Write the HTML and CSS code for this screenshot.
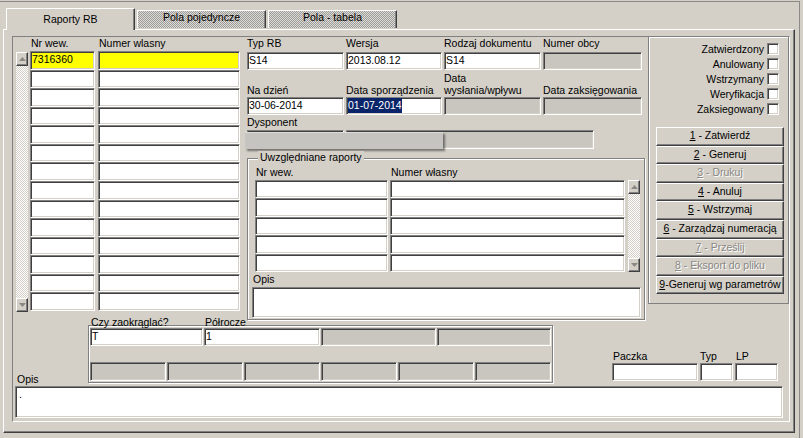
FILE: index.html
```html
<!DOCTYPE html>
<html lang="pl">
<head>
<meta charset="utf-8">
<title>Raporty RB</title>
<link rel="stylesheet" href="styles.css">
</head>
<body>
<div class="window">
  <div class="tabs">
    <div class="tab active">Raporty RB</div>
    <div class="tab dim">Pola pojedyncze</div>
    <div class="tab dim">Pola - tabela</div>
  </div>
  <div class="page">
    <div class="form">
      <div class="upper">
        <div class="list">
          <div class="list-head"><span>Nr wew.</span><span>Numer wlasny</span></div>
          <div class="list-body">
            <div class="vscroll">
              <div class="sbtn"><svg width="7" height="4" viewBox="0 0 7 4"><path d="M3.5 0L7 4H0z" fill="#8a8884"/></svg></div>
              <div class="strack"></div>
              <div class="sbtn"><svg width="7" height="4" viewBox="0 0 7 4"><path d="M0 0H7L3.5 4z" fill="#8a8884"/></svg></div>
            </div>
            <div class="rows">
              <div class="fld hl">7316360</div><div class="fld hl"></div>
              <div class="fld"></div><div class="fld"></div>
              <div class="fld"></div><div class="fld"></div>
              <div class="fld"></div><div class="fld"></div>
              <div class="fld"></div><div class="fld"></div>
              <div class="fld"></div><div class="fld"></div>
              <div class="fld"></div><div class="fld"></div>
              <div class="fld"></div><div class="fld"></div>
              <div class="fld"></div><div class="fld"></div>
              <div class="fld"></div><div class="fld"></div>
              <div class="fld"></div><div class="fld"></div>
              <div class="fld"></div><div class="fld"></div>
              <div class="fld"></div><div class="fld"></div>
              <div class="fld"></div><div class="fld"></div>
            </div>
          </div>
        </div>

        <div class="details">
          <div class="grid4">
            <div class="lbl">Typ RB</div>
            <div class="lbl">Wersja</div>
            <div class="lbl">Rodzaj dokumentu</div>
            <div class="lbl">Numer obcy</div>
            <div class="fld">S14</div>
            <div class="fld">2013.08.12</div>
            <div class="fld">S14</div>
            <div class="fld dis"></div>
            <div class="lbl lbl2">Na dzień</div>
            <div class="lbl lbl2">Data sporządzenia</div>
            <div class="lbl lbl2">Data<br>wysłania/wpływu</div>
            <div class="lbl lbl2">Data zaksięgowania</div>
            <div class="fld">30-06-2014</div>
            <div class="fld"><span class="sel">01-07-2014</span></div>
            <div class="fld dis"></div>
            <div class="fld dis"></div>
          </div>
          <div class="lbl dys-lbl">Dysponent</div>
          <div class="dys">
            <div class="fld dis dys1"></div>
            <div class="fld dis dys2"></div>
            <div class="dropshadow"></div>
          </div>
          <div class="group">
            <span class="legend">Uwzględniane raporty</span>
            <div class="g-head"><span>Nr wew.</span><span>Numer własny</span></div>
            <div class="g-body">
              <div class="g-rows">
                <div class="fld"></div><div class="fld"></div>
                <div class="fld"></div><div class="fld"></div>
                <div class="fld"></div><div class="fld"></div>
                <div class="fld"></div><div class="fld"></div>
                <div class="fld"></div><div class="fld"></div>
              </div>
              <div class="vscroll small">
                <div class="sbtn"><svg width="7" height="4" viewBox="0 0 7 4"><path d="M3.5 0L7 4H0z" fill="#8a8884"/></svg></div>
                <div class="strack"></div>
                <div class="sbtn"><svg width="7" height="4" viewBox="0 0 7 4"><path d="M0 0H7L3.5 4z" fill="#8a8884"/></svg></div>
              </div>
            </div>
            <div class="lbl g-opis-lbl">Opis</div>
            <div class="fld g-opis"></div>
          </div>
        </div>

        <div class="status">
          <div class="chk"><span>Zatwierdzony</span><i class="box"></i></div>
          <div class="chk"><span>Anulowany</span><i class="box"></i></div>
          <div class="chk"><span>Wstrzymany</span><i class="box"></i></div>
          <div class="chk"><span>Weryfikacja</span><i class="box"></i></div>
          <div class="chk"><span>Zaksiegowany</span><i class="box"></i></div>
          <div class="buttons">
            <div class="btn"><u>1</u>&nbsp;- Zatwierdź</div>
            <div class="btn"><u>2</u>&nbsp;- Generuj</div>
            <div class="btn off"><u>3</u>&nbsp;- Drukuj</div>
            <div class="btn"><u>4</u>&nbsp;- Anuluj</div>
            <div class="btn"><u>5</u>&nbsp;- Wstrzymaj</div>
            <div class="btn"><u>6</u>&nbsp;- Zarządzaj numeracją</div>
            <div class="btn off"><u>7</u>&nbsp;- Prześlij</div>
            <div class="btn off"><u>8</u>&nbsp;- Eksport do pliku</div>
            <div class="btn"><u>9</u>-Generuj wg parametrów</div>
          </div>
        </div>
      </div>

      <div class="lower">
        <div class="lower-row">
          <div class="lbl opis-lbl">Opis</div>
          <div class="round">
            <div class="round-labels"><span>Czy zaokrąglać?</span><span>Półrocze</span></div>
            <div class="round-box">
              <div class="r1">
                <div class="fld">T</div>
                <div class="fld">1</div>
                <div class="fld dis"></div>
                <div class="fld dis"></div>
              </div>
              <div class="r2">
                <div class="fld dis"></div>
                <div class="fld dis"></div>
                <div class="fld dis"></div>
                <div class="fld dis"></div>
                <div class="fld dis"></div>
                <div class="fld dis"></div>
              </div>
            </div>
          </div>
          <div class="paczka">
            <div class="lbl p1">Paczka</div>
            <div class="lbl">Typ</div>
            <div class="lbl p1">LP</div>
            <div class="fld"></div>
            <div class="fld"></div>
            <div class="fld"></div>
          </div>
        </div>
        <div class="fld opis">.</div>
      </div>
    </div>
  </div>
</div>
</body>
</html>
```

FILE: styles.css
```css
* { box-sizing: border-box; }
html, body { margin: 0; padding: 0; }
body {
  width: 803px;
  height: 438px;
  overflow: hidden;
  background: #d4d0c8;
  font-family: "Liberation Sans", Arial, sans-serif;
  font-size: 10.5px;
  color: #000;
}

.window {
  margin-top: 1px;
  width: 800px;
  height: 437px;
  border-top: 1px solid #8c8a86;
  border-right: 1px solid #8c8a86;
}

/* tabs */
.tabs {
  display: flex;
  align-items: flex-end;
  height: 27px;
  padding: 6px 0 0 6px;
}
.tab {
  width: 129px;
  text-align: center;
  white-space: nowrap;
  border-top: 1px solid #fff;
  border-left: 1px solid #fff;
  border-right: 1px solid #404040;
  box-shadow: inset -1px 0 #808080;
}
.tab.active {
  position: relative;
  z-index: 1;
  height: 22px;
  margin-bottom: -1px;
  line-height: 20px;
  background: #d4d0c8;
}
.tab.dim {
  height: 18px;
  margin-left: 2px;
  margin-bottom: 1px;
  line-height: 13px;
  background: repeating-conic-gradient(#9e9c98 0 25%, #dcdad6 0 50%) 0 0 / 2px 2px;
}

/* tab page */
.page {
  margin-left: 3px;
  width: 792px;
  height: 404px;
  border: 1px solid;
  border-color: #fff #404040 #404040 #fff;
  box-shadow: inset -1px -1px #808080;
  padding: 6px 0 0 8px;
}
.form {
  width: 778px;
  height: 386px;
  border: 1px solid;
  border-color: #808080 #fff #fff #808080;
}
.upper {
  display: flex;
  height: 276px;
}

/* generic controls */
.lbl { line-height: 13px; white-space: nowrap; }
.fld {
  background: #fff;
  border: 1px solid;
  border-color: #808080 #fff #fff #808080;
  box-shadow: inset 1px 1px #404040, inset -1px -1px #d4d0c8;
  padding: 0 1px;
  line-height: 15px;
  white-space: nowrap;
  overflow: hidden;
}
.fld.dis { background: #c9c6c0; }
.fld.hl { background: #ffff00; }
.sel {
  display: inline-block;
  background: #0a246a;
  color: #fff;
  line-height: 15px;
}

/* scrollbars */
.vscroll {
  width: 12px;
  display: flex;
  flex-direction: column;
  background: repeating-conic-gradient(#ffffff 0 25%, #d4d0c8 0 50%) 0 0 / 2px 2px;
}
.sbtn {
  height: 14px;
  flex: none;
  display: flex;
  align-items: center;
  justify-content: center;
  background: #d4d0c8;
  border: 1px solid;
  border-color: #fff #404040 #404040 #fff;
  box-shadow: inset -1px -1px #808080;
}
.sbtn svg { display: block; }
.strack { flex: 1; }

/* left list */
.list { width: 231px; padding-left: 3px; }
.list-head {
  display: grid;
  grid-template-columns: 65px 142px;
  column-gap: 3px;
  height: 14px;
  padding-left: 14px;
  line-height: 13px;
}
.list-head span { padding-left: 1px; }
.list-body { display: flex; height: 260px; }
.list-body .vscroll { margin-top: 1px; margin-right: 2px; height: 260px; }
.rows {
  display: grid;
  grid-template-columns: 65px 142px;
  grid-template-rows: repeat(14, 1fr);
  column-gap: 3px;
  height: 260px;
}

/* details */
.details { width: 404px; padding-left: 3px; }
.grid4 {
  display: grid;
  grid-template-columns: 97px 96px 97px 99px;
  grid-template-rows: 15px 18px 27px 18px;
  column-gap: 2px;
}
.lbl2 { align-self: end; line-height: 12px; padding-bottom: 1px; }
.dys-lbl { height: 14px; line-height: 14px; }
.dys {
  position: relative;
  display: flex;
  gap: 2px;
  height: 19px;
  margin-top: 1px;
}
.dys1 { width: 97px; }
.dys2 { width: 248px; background: #d4d0c8; }
.dropshadow {
  position: absolute;
  left: -2px;
  top: 2px;
  width: 198px;
  height: 17px;
  background: #c6c4c0;
  border-top: 1px solid #dedcd8;
  box-shadow: 2px 2px 2px rgba(0, 0, 0, 0.45);
}

.group {
  position: relative;
  width: 398px;
  height: 162px;
  margin-top: 9px;
  border: 1px solid #808080;
  box-shadow: inset 1px 1px #fff, 1px 1px #fff;
  padding: 7px 0 0 7px;
}
.legend {
  position: absolute;
  top: -8px;
  left: 10px;
  padding: 0 2px;
  line-height: 12px;
  background: #d4d0c8;
  white-space: nowrap;
}
.g-head {
  display: grid;
  grid-template-columns: 133px 235px;
  column-gap: 2px;
  height: 14px;
  line-height: 12px;
}
.g-head span { padding-left: 1px; }
.g-body { display: flex; gap: 3px; height: 92px; }
.g-rows {
  display: grid;
  grid-template-columns: 133px 235px;
  grid-template-rows: repeat(5, 1fr);
  column-gap: 2px;
  height: 92px;
}
.g-opis-lbl { height: 15px; line-height: 15px; margin-left: -2px; }
.g-opis { margin-left: -3px; width: 389px; height: 31px; }

/* right status panel */
.status {
  width: 141px;
  height: 268px;
  margin-top: -1px;
  border: 1px solid #808080;
  box-shadow: inset 1px 1px #fff;
  padding: 6px 9px 0 7px;
}
.chk {
  display: flex;
  justify-content: flex-end;
  align-items: flex-start;
  gap: 3px;
  height: 15px;
  line-height: 12px;
}
.box {
  width: 12px;
  height: 12px;
  background: #fff;
  border: 1px solid;
  border-color: #808080 #fff #fff #808080;
  box-shadow: inset 1px 1px #404040, inset -1px -1px #d4d0c8;
}
.buttons {
  display: grid;
  grid-template-rows: repeat(9, 18.6px);
  width: 128px;
  margin-top: 9px;
}
.btn {
  display: flex;
  justify-content: center;
  line-height: 13px;
  padding-top: 1px;
  white-space: nowrap;
  background: #d4d0c8;
  border: 1px solid;
  border-color: #fff #404040 #404040 #fff;
  box-shadow: inset -1px -1px #808080;
}
.btn.off { color: #8a8884; text-shadow: 1px 1px #fff; }

/* lower area */
.lower { height: 108px; }
.lower-row { display: flex; height: 73px; }
.opis-lbl {
  width: 75px;
  flex: none;
  padding-left: 4px;
  align-self: flex-end;
  line-height: 12px;
  margin-bottom: 1px;
}
.round { width: 465px; flex: none; }
.round-labels {
  display: grid;
  grid-template-columns: 114px 116px;
  height: 12px;
  margin-top: 3px;
  margin-bottom: -3px;
  padding-left: 3px;
  line-height: 12px;
  white-space: nowrap;
}
.round-box {
  height: 58px;
  border: 1px solid #808080;
  box-shadow: inset 1px 1px #fff, 1px 1px #fff;
  padding: 2px 0 0 1px;
}
.r1 {
  display: grid;
  grid-template-columns: 113px 116px 115px 114px;
  column-gap: 1px;
  height: 18px;
}
.r2 {
  display: grid;
  grid-template-columns: repeat(6, 76px);
  column-gap: 1px;
  height: 19px;
  margin-top: 16px;
}
.paczka {
  display: grid;
  grid-template-columns: 86px 33px 43px;
  grid-template-rows: 13px 18px;
  column-gap: 2px;
  margin-left: 59px;
  margin-top: 37px;
  height: 31px;
}
.p1 { padding-left: 1px; }
.opis {
  margin-left: 2px;
  width: 768px;
  height: 32px;
  padding: 0 3px;
}
```
